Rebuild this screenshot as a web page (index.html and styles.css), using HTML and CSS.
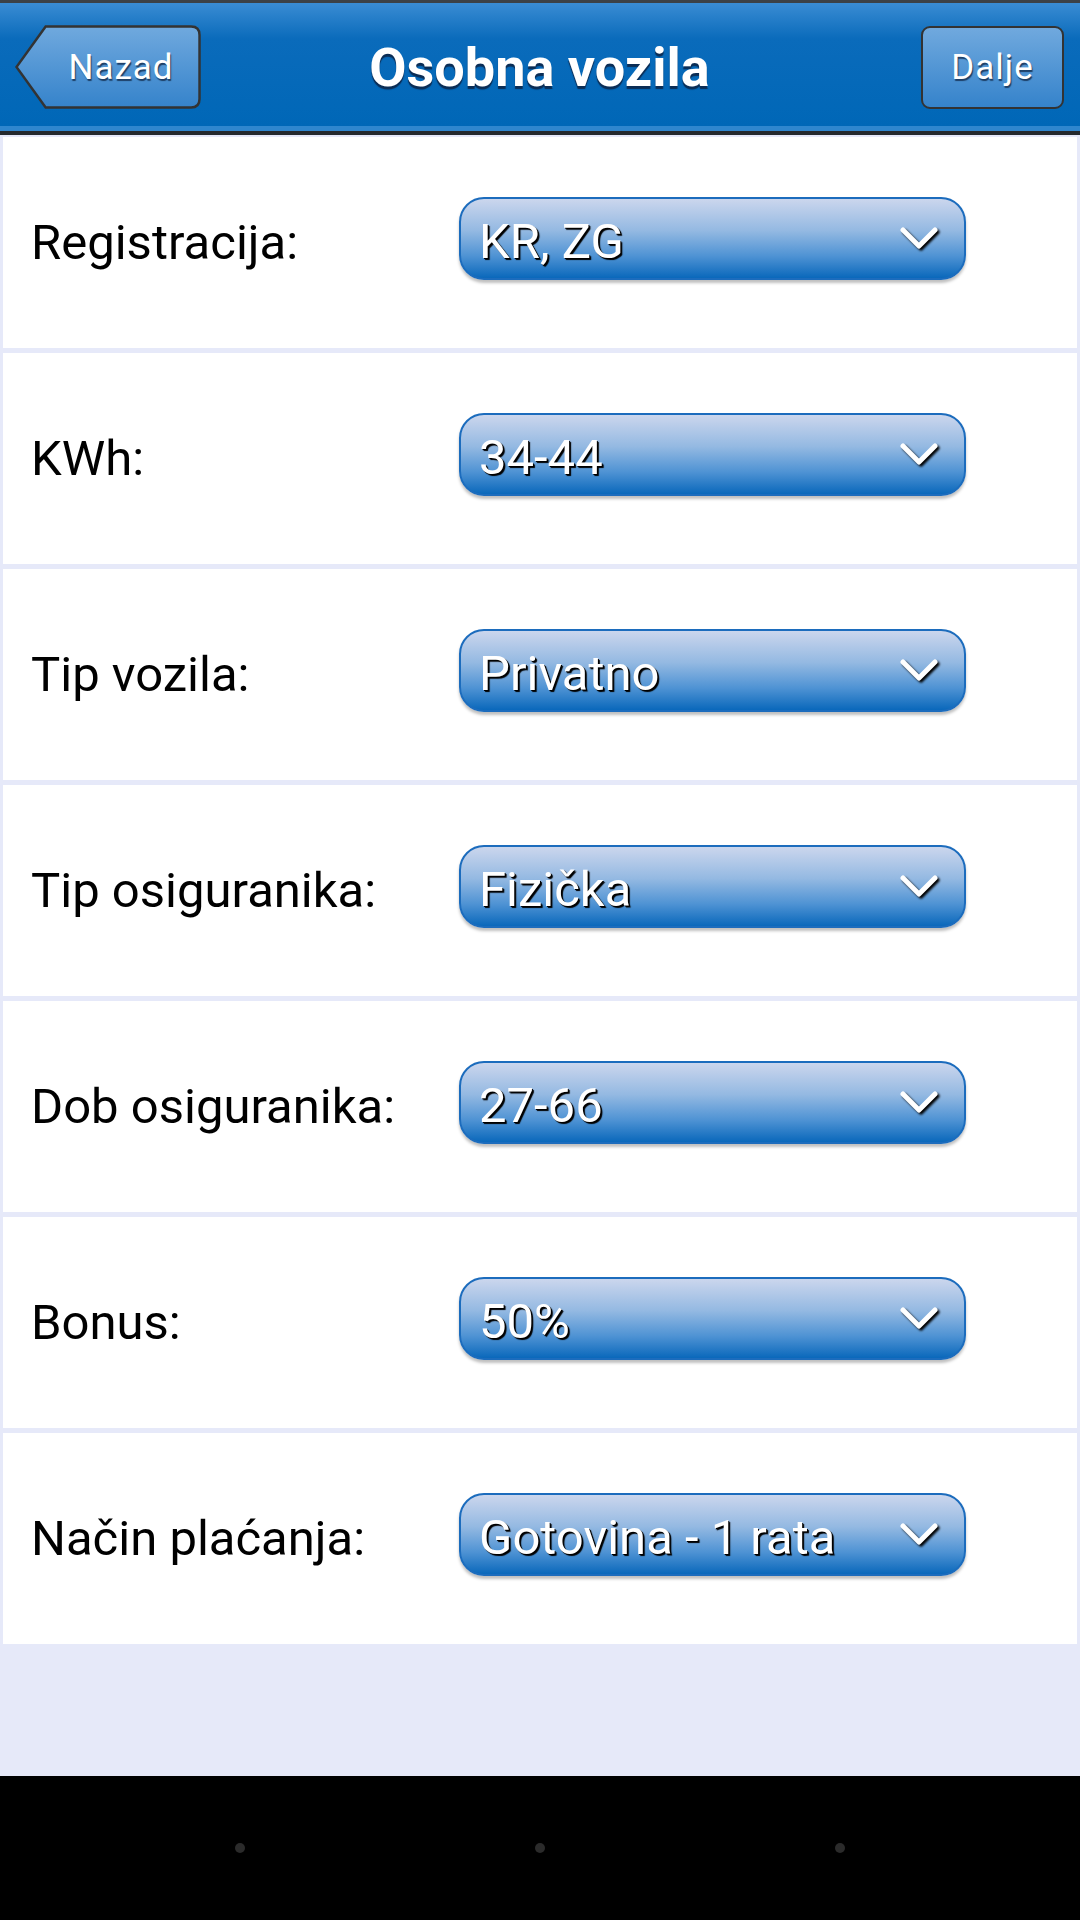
FILE: index.html
```html
<!DOCTYPE html>
<html lang="hr">
<head>
    <meta charset="UTF-8">
    <meta name="viewport" content="width=device-width, initial-scale=1.0">
    <title>Osobna vozila</title>
    <link rel="stylesheet" href="styles.css">
</head>
<body>
    <header class="topbar">
        <button class="back">
            <svg class="backShape" viewBox="0 0 188 84" preserveAspectRatio="none">
                <defs>
                    <linearGradient id="btnFill" x1="0" y1="0" x2="0" y2="1">
                        <stop offset="0" stop-color="#70a9de"/>
                        <stop offset="1" stop-color="#3583cb"/>
                    </linearGradient>
                </defs>
                <path d="M31 1.5 H178 Q186.5 1.5 186.5 10 V74 Q186.5 82.5 178 82.5 H31 L1.5 42 Z" fill="url(#btnFill)" stroke="#333" stroke-width="2.5"/>
            </svg>
            <span>Nazad</span>
        </button>
        <h1 class="title">Osobna vozila</h1>
        <button class="next">Dalje</button>
    </header>

    <main class="form">
        <div class="row">
            <label>Registracija:</label>
            <div class="select"><span>KR, ZG</span><svg class="chev" viewBox="0 0 40 28"><polyline points="4,5 20,21 36,5"/></svg></div>
        </div>
        <div class="row">
            <label>KWh:</label>
            <div class="select"><span>34-44</span><svg class="chev" viewBox="0 0 40 28"><polyline points="4,5 20,21 36,5"/></svg></div>
        </div>
        <div class="row">
            <label>Tip vozila:</label>
            <div class="select"><span>Privatno</span><svg class="chev" viewBox="0 0 40 28"><polyline points="4,5 20,21 36,5"/></svg></div>
        </div>
        <div class="row">
            <label>Tip osiguranika:</label>
            <div class="select"><span>Fizička</span><svg class="chev" viewBox="0 0 40 28"><polyline points="4,5 20,21 36,5"/></svg></div>
        </div>
        <div class="row">
            <label>Dob osiguranika:</label>
            <div class="select"><span>27-66</span><svg class="chev" viewBox="0 0 40 28"><polyline points="4,5 20,21 36,5"/></svg></div>
        </div>
        <div class="row">
            <label>Bonus:</label>
            <div class="select"><span>50%</span><svg class="chev" viewBox="0 0 40 28"><polyline points="4,5 20,21 36,5"/></svg></div>
        </div>
        <div class="row">
            <label>Način plaćanja:</label>
            <div class="select"><span>Gotovina - 1 rata</span><svg class="chev" viewBox="0 0 40 28"><polyline points="4,5 20,21 36,5"/></svg></div>
        </div>
    </main>

    <footer class="navbar">
        <i class="dot"></i>
        <i class="dot"></i>
        <i class="dot"></i>
    </footer>
</body>
</html>
```

FILE: styles.css
```css
*{
    box-sizing: border-box;
}
body{
    margin: 0;
    width: 1080px;
    height: 1920px;
    display: flex;
    flex-direction: column;
    background-color: #e6e9f9;
    font-family: Roboto, 'Liberation Sans', sans-serif;
}
/* ___________ header ___________ */
.topbar{
    height: 135px;
    display: grid;
    grid-template-columns: 1fr auto 1fr;
    align-items: center;
    padding: 0 16px 0 15px;
    border-top: 3px solid #3c4146;
    border-bottom: 4px solid #25292d;
    background: linear-gradient(#3a8cd3, #0a6bbb 28%, #0067b7 96%, #2f86ce 96%);
}
.title{
    margin: 0;
    color: #fff;
    font-size: 54px;
    font-weight: 700;
    text-shadow: 0 3px 1px #0b2d55;
}
.back, .next{
    height: 84px;
    border: none;
    color: #fff;
    font-family: inherit;
    font-size: 35px;
    letter-spacing: 1px;
    text-shadow: 1px 2px 1px #1d3f66;
    cursor: pointer;
}
.back{
    justify-self: start;
    position: relative;
    width: 186px;
    padding: 0 0 0 26px;
    background: none;
}
.back .backShape{
    position: absolute;
    top: 0;
    left: 0;
    width: 100%;
    height: 100%;
}
.back span{
    position: relative;
}
.next{
    justify-self: end;
    width: 143px;
    height: 83px;
    border: 2.5px solid #333;
    border-radius: 9px;
    background: linear-gradient(#70a9de, #3583cb);
}
/* ___________ rows ___________ */
.form{
    padding: 2px 3px 0;
    flex: 1;
}
.row{
    height: 211px;
    margin-bottom: 5px;
    padding-left: 28px;
    display: flex;
    align-items: center;
    background-color: #fff;
}
.row label{
    width: 428px;
    font-size: 49px;
    color: #000;
}
.select{
    width: 507px;
    height: 83px;
    margin-bottom: 8px;
    padding: 5px 25px 0 18px;
    display: flex;
    align-items: center;
    justify-content: space-between;
    border: 2px solid #1c6cbd;
    border-radius: 25px;
    background: linear-gradient(#cbd6ed, #94b9e2 40%, #4f93d4 72%, #0a68bb);
    box-shadow: 0 3px 3px rgba(0, 0, 0, 0.25);
    color: #fff;
    font-size: 49px;
    text-shadow: 2px 2px 1px #000, 1px 1px 0 #000;
}
.chev{
    width: 40px;
    height: 28px;
    margin-top: -5px;
    fill: none;
    stroke: #fff;
    stroke-width: 5;
    stroke-linecap: round;
    stroke-linejoin: round;
    filter: drop-shadow(2px 2px 1px #000);
}
/* ___________ nav bar ___________ */
.navbar{
    height: 144px;
    background-color: #000;
    display: flex;
    align-items: center;
    justify-content: space-between;
    padding: 0 235px;
}
.dot{
    width: 10px;
    height: 10px;
    border-radius: 50%;
    background-color: #2b2b2b;
}
```
